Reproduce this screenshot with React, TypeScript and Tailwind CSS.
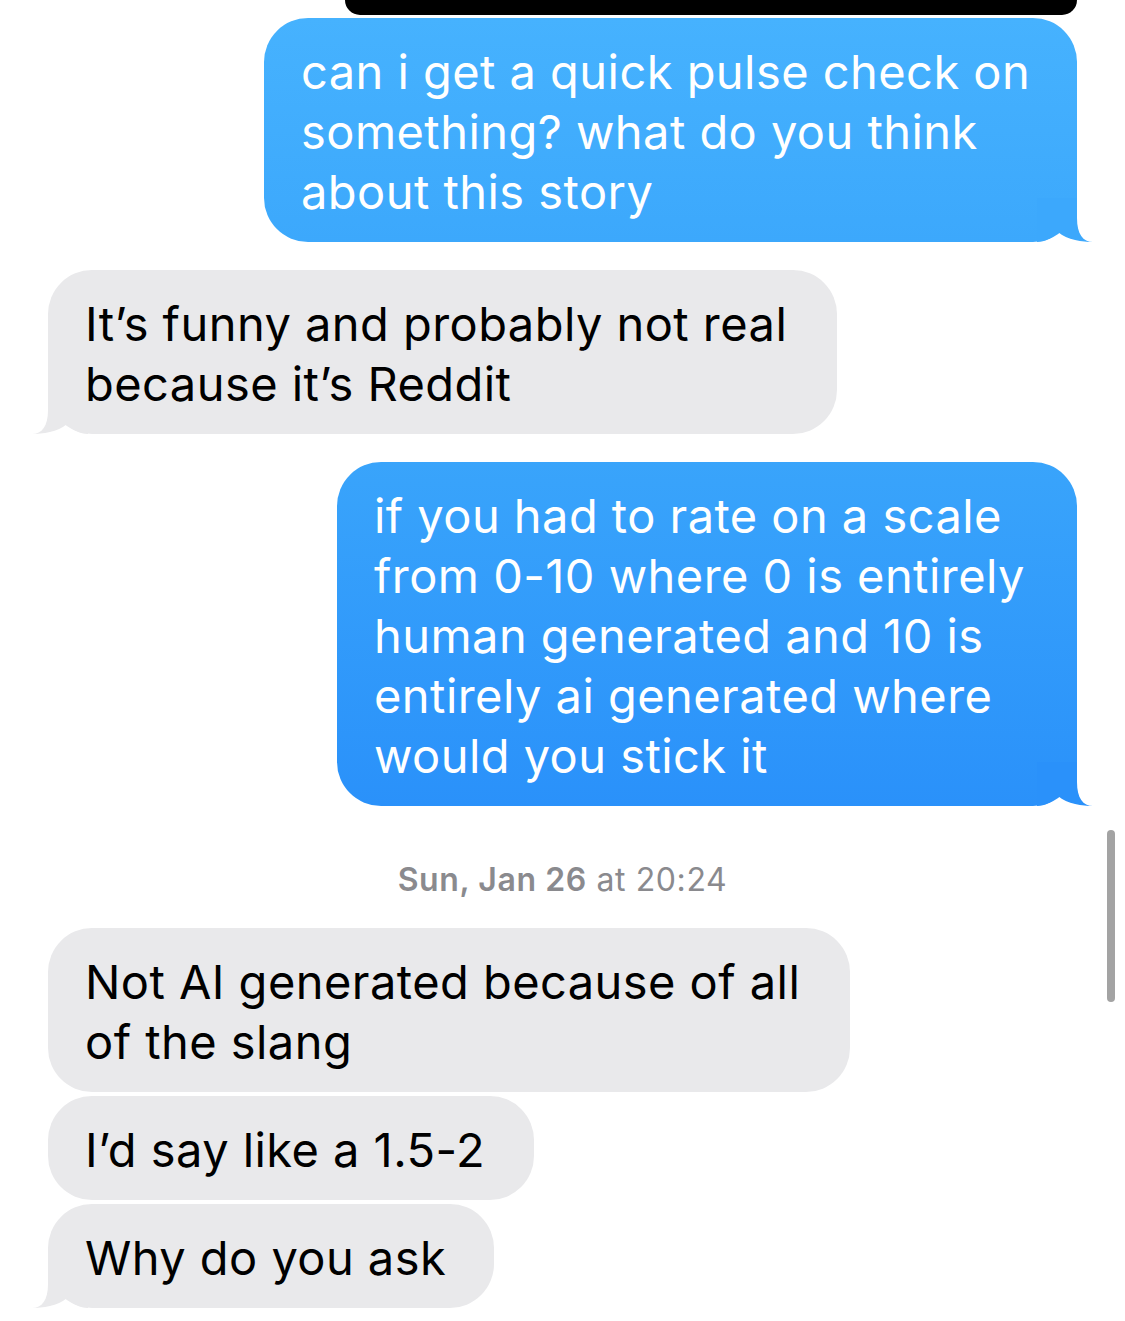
import React from 'react';

type Side = 'me' | 'them';

interface Bubble {
  side: Side;
  lines: string[];
  width: string;
  tail?: boolean;
  gap: string;
  tone?: string;
  tailFill?: string;
}

const TAIL_PATH = 'M0 0 L40 0 L40 20 C40 36 46 44 56 44 C46 44 30 42 21 34 C15 40 8 44 0 44 Z';

function Tail({ side, fill }: { side: Side; fill: string }) {
  if (side === 'me') {
    return (
      <svg className="absolute bottom-0 right-[-16px] h-[44px] w-[56px]" viewBox="0 0 56 44">
        <path d={TAIL_PATH} fill={fill} />
      </svg>
    );
  }
  return (
    <svg className="absolute bottom-0 left-[-16px] h-[44px] w-[56px] -scale-x-100" viewBox="0 0 56 44">
      <path d={TAIL_PATH} fill={fill} />
    </svg>
  );
}

function MessageBubble({ msg }: { msg: Bubble }) {
  const mine = msg.side === 'me';
  return (
    <div className={`${msg.gap} flex ${mine ? 'justify-end pr-[48px]' : 'justify-start pl-[48px]'}`}>
      <div
        className={`relative ${msg.width} rounded-[44px] pl-[37px] pt-[24px] pb-[20px] ${
          mine ? `${msg.tone} text-white` : 'bg-[#e9e9eb] text-black'
        }`}
      >
        {msg.lines.map((line, i) => (
          <div key={i} className="relative z-10 whitespace-nowrap text-[47px] leading-[60px] tracking-[0.45px]">
            {line}
          </div>
        ))}
        {msg.tail && <Tail side={msg.side} fill={msg.tailFill || '#e9e9eb'} />}
      </div>
    </div>
  );
}

const before: Bubble[] = [
  {
    side: 'me',
    lines: ['can i get a quick pulse check on', 'something? what do you think', 'about this story'],
    width: 'w-[813px]',
    tail: true,
    gap: 'mt-[3px]',
    tone: 'bg-gradient-to-b from-[#46b2fe] to-[#3ca8fc]',
    tailFill: '#3ca8fc',
  },
  {
    side: 'them',
    lines: ['It\u2019s funny and probably not real', 'because it\u2019s Reddit'],
    width: 'w-[789px]',
    tail: true,
    gap: 'mt-[28px]',
  },
  {
    side: 'me',
    lines: [
      'if you had to rate on a scale',
      'from 0-10 where 0 is entirely',
      'human generated and 10 is',
      'entirely ai generated where',
      'would you stick it',
    ],
    width: 'w-[740px]',
    tail: true,
    gap: 'mt-[28px]',
    tone: 'bg-gradient-to-b from-[#39a4fb] to-[#2a91fa]',
    tailFill: '#2a91fa',
  },
];

const after: Bubble[] = [
  {
    side: 'them',
    lines: ['Not AI generated because of all', 'of the slang'],
    width: 'w-[802px]',
    gap: 'mt-[30px]',
  },
  { side: 'them', lines: ['I\u2019d say like a 1.5-2'], width: 'w-[486px]', gap: 'mt-[4px]' },
  { side: 'them', lines: ['Why do you ask'], width: 'w-[446px]', tail: true, gap: 'mt-[4px]' },
];

export default function App() {
  return (
    <div className="relative h-[1321px] w-[1125px] overflow-hidden bg-white font-['Inter','Noto_Sans',sans-serif]">
      {/* cut-off top of the screen above the thread */}
      <div className="ml-[345px] h-[15px] w-[732px] rounded-b-[22px] bg-black" />

      {before.map((m, i) => (
        <MessageBubble key={i} msg={m} />
      ))}

      <div className="mt-[56px] text-center text-[32px] leading-[36px] tracking-[0.6px] text-[#8a8a8e]">
        <span className="font-semibold">Sun, Jan 26</span> at 20:24
      </div>

      {after.map((m, i) => (
        <MessageBubble key={i} msg={m} />
      ))}

      {/* scroll indicator */}
      <div className="absolute left-[1107px] top-[830px] h-[172px] w-[8px] rounded-full bg-[#a3a3a3]" />
    </div>
  );
}
